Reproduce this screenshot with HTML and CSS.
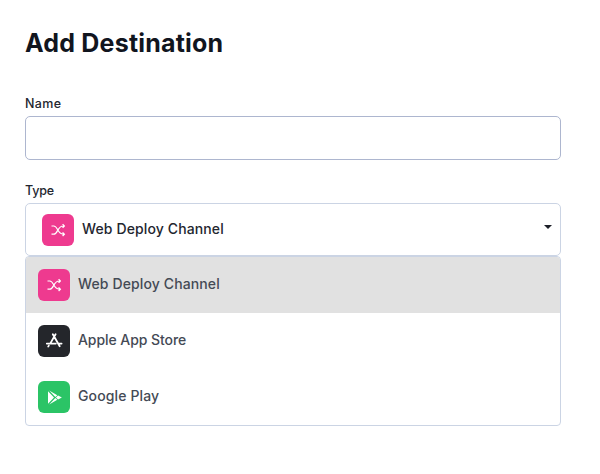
FILE: index.html
```html
<!DOCTYPE html>
<html lang="en">
<head>
<meta charset="utf-8">
<title>Add Destination</title>
<link rel="stylesheet" href="styles.css">
</head>
<body>
<svg class="symbols" aria-hidden="true">
  <symbol id="shuffle" viewBox="0 0 32 32">
    <path d="M9.5 12h2.3c4 0 3.7 8.2 9.3 8.2h1M9.5 20.2h2.3c4 0 3.7-8.2 9.3-8.2h1M20.6 10.2l1.8 1.8-1.8 1.8M20.6 18.4l1.8 1.8-1.8 1.8" fill="none" stroke="#fff" stroke-width="1.2"/>
  </symbol>
  <symbol id="appstore" viewBox="0 0 32 32">
    <path d="M14.8 9.2l6.9 12M17.6 9.2L12.2 18.6M10.8 20.6l-.6 1M8.8 18.6h9M20.6 18.6h3" fill="none" stroke="#fff" stroke-width="1.8" stroke-linecap="round"/>
  </symbol>
  <symbol id="play" viewBox="0 0 32 32">
    <path d="M10 10.2l6 6.3-6 6.3zM11.2 9.6l8.1 4.6-2 1.9zM11.2 23.4l8.1-4.6-2-1.9zM20.1 14.4l3.8 2.1-3.8 2.1-2.2-2.1z" fill="#fff"/>
  </symbol>
</svg>
<main class="form">
  <h1 class="title">Add Destination</h1>
  <label class="label" for="name">Name</label>
  <input class="input" id="name" type="text">
  <div class="label type">Type</div>
  <div class="select">
    <svg class="icon pink"><use href="#shuffle"/></svg>
    <span class="text">Web Deploy Channel</span>
    <svg class="caret" viewBox="0 0 8 4"><path d="M0 0h8L4 4z"/></svg>
  </div>
  <ul class="menu">
    <li class="option active"><svg class="icon pink"><use href="#shuffle"/></svg><span class="text">Web Deploy Channel</span></li>
    <li class="option"><svg class="icon black"><use href="#appstore"/></svg><span class="text apple">Apple App Store</span></li>
    <li class="option"><svg class="icon green"><use href="#play"/></svg><span class="text">Google Play</span></li>
  </ul>
</main>
</body>
</html>
```
FILE: styles.css
```css
* { box-sizing: border-box; }
body { margin: 0; background: #fff; font-family: Inter, "Liberation Sans", sans-serif; color: #23262f; }
.symbols { display: none; }
.form { width: 536px; margin-left: 25px; padding-top: 27px; }
.title { margin: 0 0 36px; font-size: 25px; line-height: 32px; font-weight: 650; letter-spacing: 0.2px; color: #11151e; }
.label { display: block; height: 21px; font-size: 12.5px; line-height: 17px; font-weight: 550; letter-spacing: 0.4px; }
.type { letter-spacing: -0.2px; }
.input { display: block; width: 100%; height: 44px; margin: 0 0 22px; border: 1px solid #adb6cf; border-radius: 5px; background: #fff; outline: none; }
.select { display: flex; align-items: center; height: 53px; padding: 0 8px 0 16px; border: 1px solid #cbd4e4; border-radius: 5px; }
.icon { flex: none; width: 32px; height: 32px; margin-right: 8px; border-radius: 6px; }
.pink { background: #ee3a8f; }
.black { background: #24262b; }
.green { background: #2bc466; }
.text { font-size: 14px; line-height: 20px; font-weight: 550; letter-spacing: 0.12px; margin-top: -1px; white-space: nowrap; }
.option .text { margin-top: -2px; }
.option .apple { letter-spacing: -0.07px; }
.caret { width: 8px; height: 4px; margin: -5px 0 0 auto; fill: #1c1f28; }
.menu { list-style: none; margin: 0; padding: 0; border: 1px solid #cbd4e4; border-radius: 4px; overflow: hidden; }
.option { display: flex; align-items: center; height: 56px; padding-left: 12px; color: #444a55; }
.active { background: #e1e1e1; }
```
